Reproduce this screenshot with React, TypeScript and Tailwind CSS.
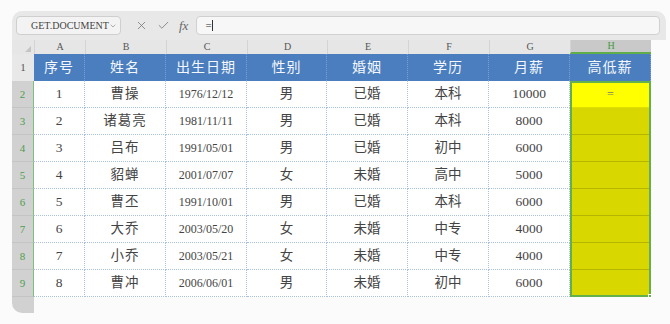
import { X, Check, ChevronDown } from "lucide-react"

const cols = ["A", "B", "C", "D", "E", "F", "G", "H"]
const widths = ["w-[51px]", "w-[81px]", "w-[81px]", "w-[80px]", "w-[81px]", "w-[81px]", "w-[81px]", "w-[81px]"]
const head = ["序号", "姓名", "出生日期", "性别", "婚姻", "学历", "月薪", "高低薪"]

const rows = [
  ["1", "曹操", "1976/12/12", "男", "已婚", "本科", "10000"],
  ["2", "诸葛亮", "1981/11/11", "男", "已婚", "本科", "8000"],
  ["3", "吕布", "1991/05/01", "男", "已婚", "初中", "6000"],
  ["4", "貂蝉", "2001/07/07", "女", "未婚", "高中", "5000"],
  ["5", "曹丕", "1991/10/01", "男", "已婚", "本科", "6000"],
  ["6", "大乔", "2003/05/20", "女", "未婚", "中专", "4000"],
  ["7", "小乔", "2003/05/21", "女", "未婚", "中专", "4000"],
  ["8", "曹冲", "2006/06/01", "男", "未婚", "初中", "6000"],
]

const font = "font-['Liberation_Serif','Noto_Sans_CJK_SC',serif]"

export default function App() {
  return (
    <div className={`w-[670px] h-[324px] bg-[#fbfbfc] pt-[11px] pl-[12px] overflow-hidden ${font}`}>
      {/* 工具栏 */}
      <div className="w-[654px] h-[29px] rounded-t-[10px] bg-[#e8e8e8] flex items-center pl-[4px] gap-[8px]">
        <div className="w-[105px] h-[19px] rounded-[4px] border border-[#cfcfcf] bg-[#f3f3f3] flex items-center justify-between pl-[14px] pr-[3px]">
          <span className="text-[10px] text-[#444]">GET.DOCUMENT</span>
          <ChevronDown className="w-[8px] h-[8px] text-[#888]" strokeWidth={2} />
        </div>
        <div className="flex items-center gap-[9px] pl-[6px] text-[#777]">
          <X className="w-[13px] h-[13px]" strokeWidth={1.5} />
          <Check className="w-[13px] h-[13px]" strokeWidth={1.5} />
          <span className="italic text-[13px] text-[#666]">fx</span>
        </div>
        <div className="flex-1 h-[19px] mr-[6px] rounded-[4px] border border-[#d0d0d0] bg-[#f7f7f7] flex items-center pl-[8px] text-[11px] text-[#333]">
          =<span className="w-px h-[11px] bg-[#333]" />
        </div>
      </div>

      <div className="relative w-[639px]">
        {/* 列标 */}
        <div className="flex h-[14px] bg-[#e6e6e6]">
          <div className="w-[22px] flex items-end justify-end pr-[3px] pb-[2px]">
            <div className="w-0 h-0 border-l-[6px] border-l-transparent border-b-[6px] border-b-[#c4c4c4]" />
          </div>
          {cols.map((c, i) => (
            <div key={c}
              className={`${widths[i]} flex items-center justify-center text-[10px] leading-none border-l border-[#d4d4d4] ${c === "H" ? "bg-[#c9c9c9] text-[#3f9a3f] border-b-2 border-b-[#5fae4a]" : "text-[#555]"}`}>
              {c}
            </div>
          ))}
        </div>

        {/* 表头 */}
        <div className="flex h-[27px]">
          <div className="w-[22px] bg-[#e8e8e8] flex items-center justify-center text-[11px] text-[#555]">1</div>
          {head.map((h, i) => (
            <div key={h}
              className={`${widths[i]} bg-[#4a7ebe] border-r border-dotted border-[#7aa0d4] flex items-center justify-center text-[#f4f7fb] text-[14px] tracking-[1px]`}>
              {h}
            </div>
          ))}
        </div>

        {/* 数据 */}
        {rows.map((r, ri) => (
          <div key={ri} className="flex h-[27px]">
            <div className="w-[22px] bg-[#d1d1d1] border-r border-[#7cc27a] flex items-center justify-center text-[11px] text-[#4e9e4e] border-b border-b-[#c4c4c4]">
              {ri + 2}
            </div>
            {r.map((v, i) => (
              <div key={i}
                className={`${widths[i]} bg-white border-r border-b border-dotted border-[#a9c2e2] flex items-center justify-center text-[#444] ${i === 2 ? "text-[12px]" : "text-[13.5px]"} ${i === 1 ? "tracking-[1px]" : ""}`}>
                {v}
              </div>
            ))}
            <div className={`w-[81px] border-b ${ri === 0 ? "bg-[#ffff00] border-[#e0e000]" : "bg-[#d8d800] border-[#b5b500]"} flex items-center justify-center text-[12px] text-[#777]`}>
              {ri === 0 ? "=" : ""}
            </div>
          </div>
        ))}

        {/* 选区边框 */}
        <div className="absolute left-[558px] top-[41px] w-[81px] h-[216px] border-2 border-[#62b14c] pointer-events-none">
          <div className="absolute -right-[3px] -bottom-[3px] w-[4px] h-[4px] bg-[#62b14c] border border-white" />
        </div>

        <div className="w-[22px] h-[16px] bg-[#d1d1d1] rounded-bl-[10px]" />
      </div>
    </div>
  )
}
